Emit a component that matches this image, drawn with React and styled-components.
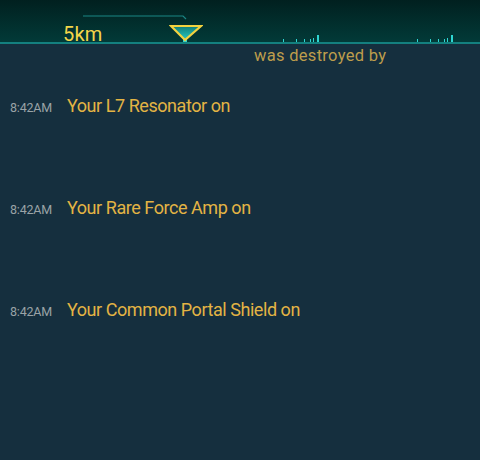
import React from "react";
import styled, { createGlobalStyle } from "styled-components";

const GlobalStyle = createGlobalStyle`
  html, body {
    margin: 0;
    padding: 0;
    background: #152f3e;
    font-family: Roboto, "Liberation Sans", sans-serif;
  }
`;

const events = [
  { time: "8:42AM", text: "Your L7 Resonator on" },
  { time: "8:42AM", text: "Your Rare Force Amp on" },
  { time: "8:42AM", text: "Your Common Portal Shield on" },
];

const barGroup = [
  { x: 0, h: 3, w: 1 },
  { x: 13, h: 3, w: 1 },
  { x: 21, h: 3, w: 1 },
  { x: 27, h: 3, w: 1 },
  { x: 30, h: 4, w: 1 },
  { x: 34, h: 7, w: 2 },
];

export default function App() {
  return (
    <>
      <GlobalStyle />
      <Page>
        <Header>
          <ScaleGroup>
            <ScaleLine width="106" height="5" viewBox="0 0 106 5">
              <path d="M0 1 H100 L103 4" fill="none" stroke="#1a8584" strokeWidth="1.2" />
            </ScaleLine>
            <LabelRow>
              <ScaleLabel>5km</ScaleLabel>
              <Marker width="34" height="18" viewBox="0 0 34 18">
                <defs>
                  <linearGradient id="mk" x1="0" y1="0" x2="0" y2="1">
                    <stop offset="0" stopColor="#0e7d78" />
                    <stop offset="1" stopColor="#29c9c1" />
                  </linearGradient>
                </defs>
                <rect x="14" y="13" width="4" height="5" fill="#2dd4cc" />
                <polygon points="2,2 32,2 16,16" fill="url(#mk)" stroke="#f3d23f" strokeWidth="2.2" />
              </Marker>
            </LabelRow>
          </ScaleGroup>
          <Bars width="180" height="8" viewBox="0 0 180 8">
            {[0, 134].map((off) =>
              barGroup.map((b, i) => (
                <rect
                  key={`${off}-${i}`}
                  x={off + b.x}
                  y={8 - b.h}
                  width={b.w}
                  height={b.h}
                  fill="#2fd6d2"
                />
              ))
            )}
          </Bars>
        </Header>
        <Body>
          <Caption>was destroyed by</Caption>
          <List>
            {events.map((e, i) => (
              <Row key={i}>
                <Time>{e.time}</Time>
                <Message>{e.text}</Message>
              </Row>
            ))}
          </List>
        </Body>
      </Page>
    </>
  );
}

// --- STYLES ---

const Page = styled.div`
  width: 480px;
  height: 460px;
  background: #152f3e;
  overflow: hidden;
`;

const Header = styled.div`
  height: 44px;
  box-sizing: border-box;
  display: flex;
  align-items: flex-end;
  padding-left: 63px;
  background: linear-gradient(180deg, #01201f 0%, #023a38 100%);
  border-bottom: 2px solid #14807f;
`;

const ScaleGroup = styled.div`
  display: flex;
  flex-direction: column;
`;

const ScaleLine = styled.svg`
  display: block;
  margin-left: 20px;
  margin-bottom: 4px;
`;

const LabelRow = styled.div`
  display: flex;
  align-items: flex-end;
`;

const ScaleLabel = styled.span`
  color: #f3d64a;
  font-size: 20px;
  line-height: 15px;
  letter-spacing: 0.2px;
`;

const Marker = styled.svg`
  display: block;
  margin-left: 66px;
`;

const Bars = styled.svg`
  display: block;
  margin-left: 80px;
`;

const Body = styled.div`
  display: flex;
  flex-direction: column;
`;

const Caption = styled.div`
  padding-left: 254px;
  margin-top: 2px;
  color: #bd9d4c;
  font-size: 16.5px;
  line-height: 20px;
  letter-spacing: 0.3px;
`;

const List = styled.div`
  display: flex;
  flex-direction: column;
  gap: 80px;
  margin-top: 29px;
`;

const Row = styled.div`
  display: flex;
  align-items: baseline;
  height: 22px;
  padding-left: 10px;
`;

const Time = styled.span`
  width: 57px;
  color: #9aa3a6;
  font-size: 12.5px;
  letter-spacing: -0.2px;
`;

const Message = styled.span`
  color: #e3b444;
  font-size: 18px;
  letter-spacing: -0.45px;
`;
